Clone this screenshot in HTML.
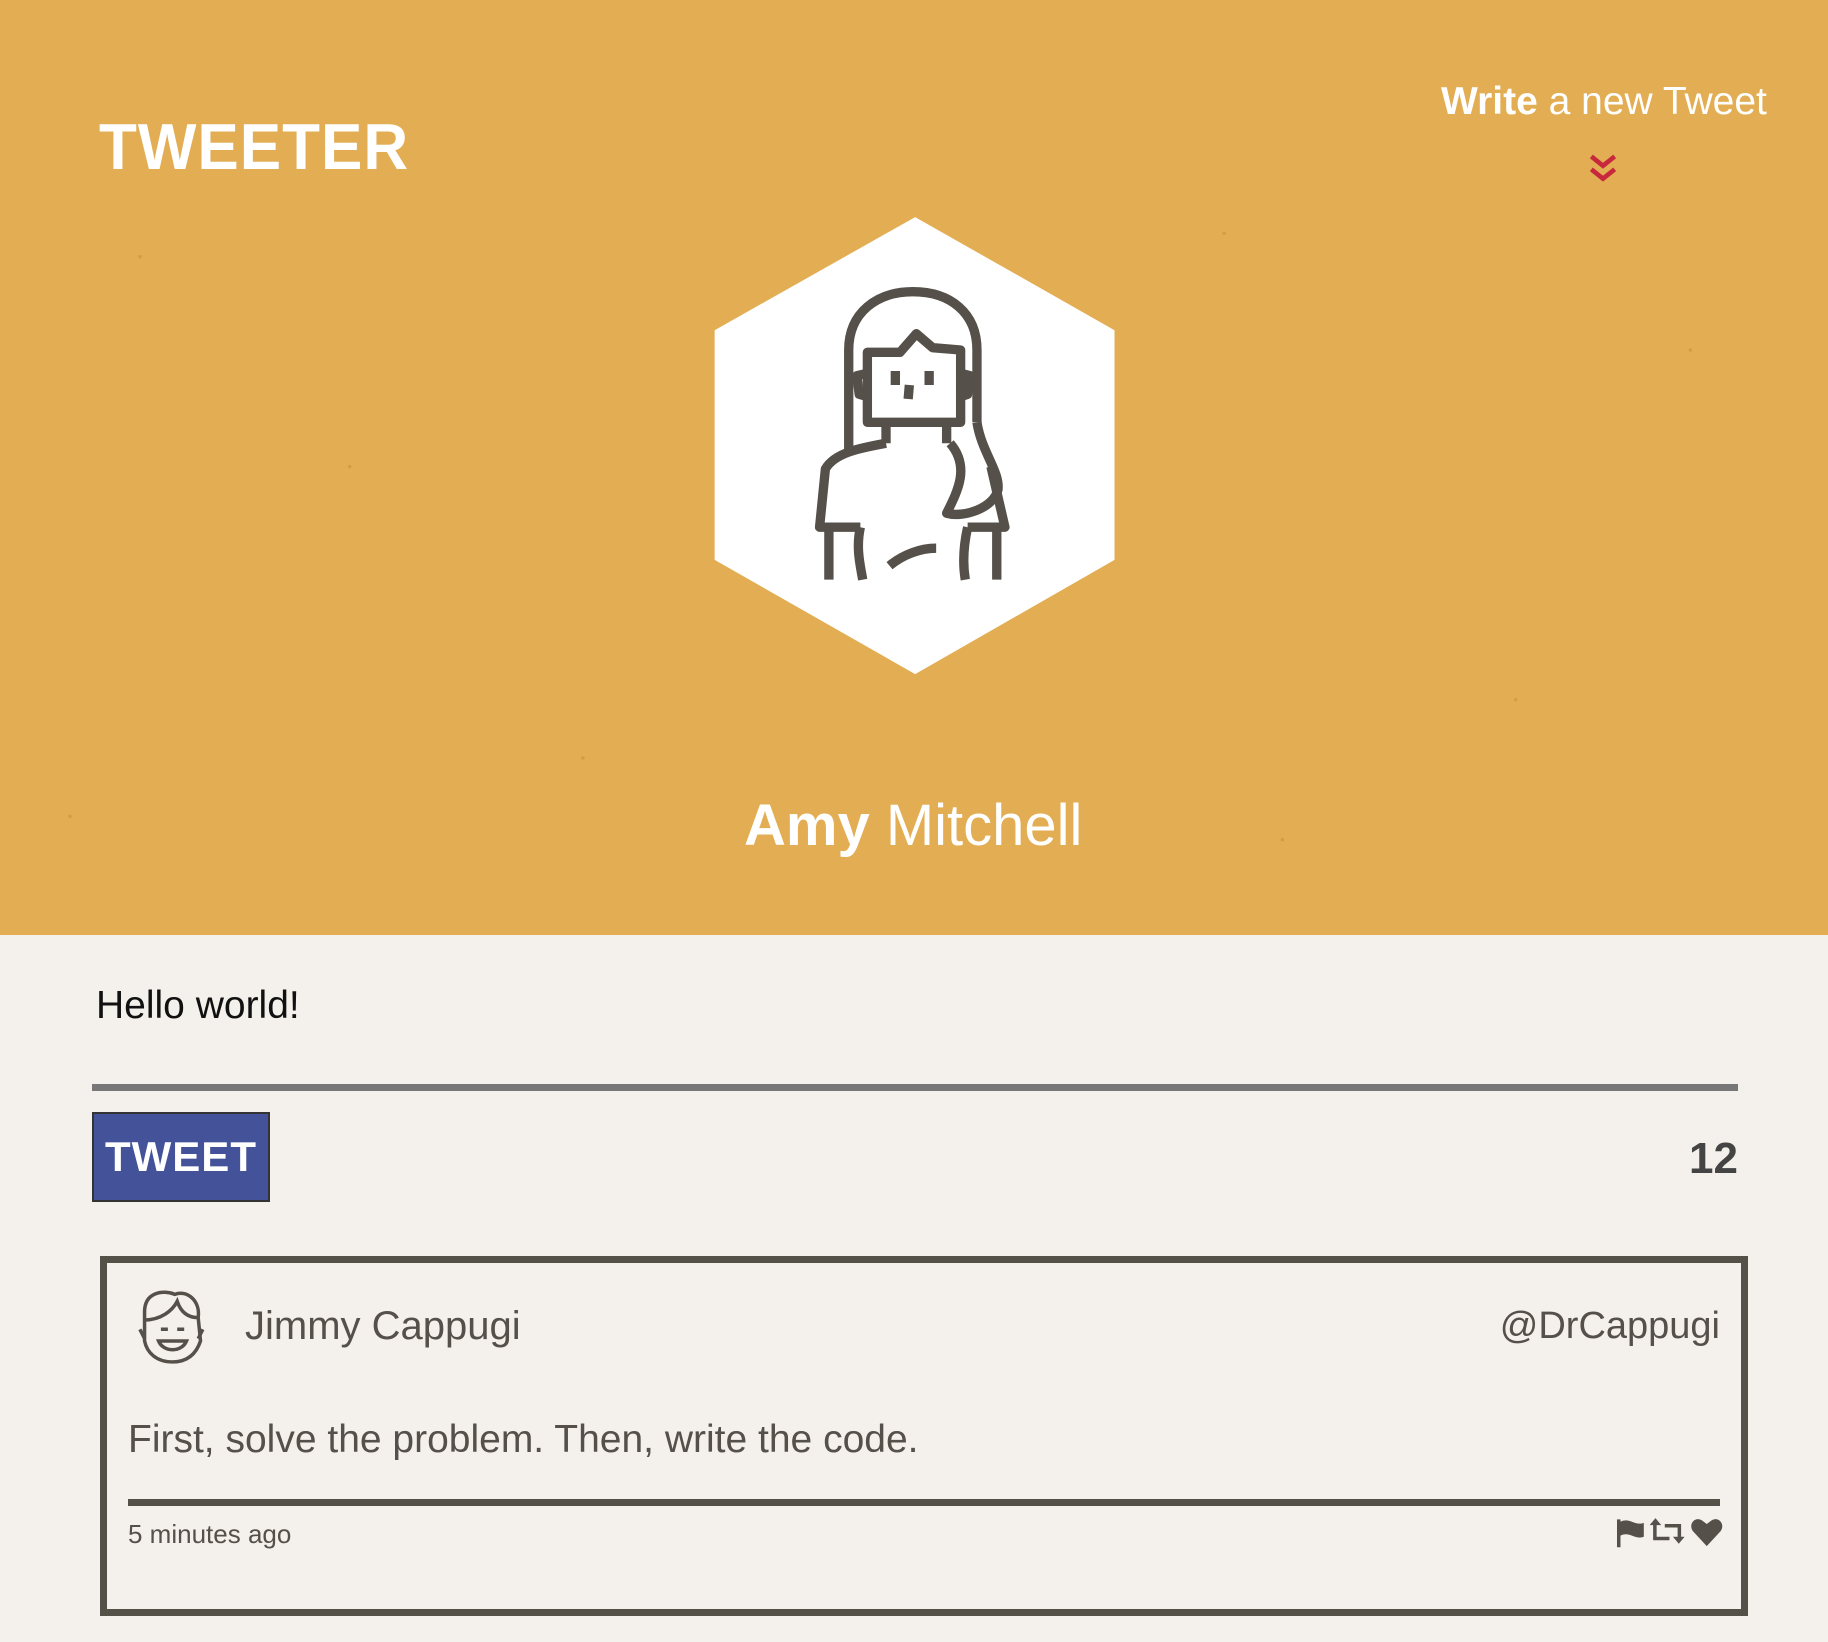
<!DOCTYPE html>
<html><head><meta charset="utf-8"><style>
*{margin:0;padding:0;box-sizing:border-box}
body{width:1828px;height:1642px;background:#f4f1ec;font-family:"Liberation Sans",sans-serif;position:relative;overflow:hidden}
.hdr{position:absolute;left:0;top:0;width:1828px;height:935px;background:#e2ad53}
.abs{position:absolute;white-space:nowrap}
</style></head><body>
<div class="hdr"></div>
<svg class="abs" style="left:0;top:0" width="1828" height="1642" viewBox="0 0 1568 1408">
<g fill="#c48f3a" opacity=".55">
<circle cx="120" cy="220" r="1.5"/><circle cx="300" cy="400" r="1.5"/><circle cx="1050" cy="200" r="1.5"/><circle cx="1300" cy="600" r="1.5"/><circle cx="500" cy="650" r="1.5"/><circle cx="1450" cy="300" r="1.5"/><circle cx="60" cy="700" r="1.5"/><circle cx="1100" cy="720" r="1.5"/>
</g>
<polygon points="785,186 956,283 956,480 785,578 613,480 613,283" fill="#fff"/>
<g fill="none" stroke="#555049" stroke-width="8" stroke-linecap="butt" stroke-linejoin="round">
<path d="M728,385 L728,300 C728,268 752,250 783,250 C815,250 838,268 838,300 L838,362"/>
<path d="M744,362 L744,302 L772,302 L786,286 L800,298 L824,300 L824,362 Z"/>
<path d="M744,320 L735,322 L737,338 L744,340 M824,320 L832,322 L830,338 L824,340"/>
<path d="M768,318 L768,330 M797,318 L797,330 M780,330 L779,342"/>
<path d="M760,362 L760,380 M812,362 L812,380"/>
<path d="M838,362 C842,388 858,404 856,420 C852,436 826,444 812,440 C822,420 832,400 815,380"/>
<path d="M760,380 C738,384 716,388 708,402 L703,452 L738,452 M850,400 L862,452 L830,452"/>
<path d="M711,452 L711,497 M738,452 C734,470 738,485 740,497 M830,452 C826,470 826,485 828,497 M855,452 L855,497"/>
<path d="M763,485 C775,475 790,470 803,470"/>
</g>
<path d="M1365,134 L1375,142 L1385,134 M1365,145 L1375,153 L1385,145" fill="none" stroke="#c8283c" stroke-width="4"/>
<g fill="none" stroke="#555049" stroke-width="3">
<path d="M124,1125 C124,1108 140,1106 150,1110 C160,1106 172,1115 170,1130 L172,1150 C168,1162 160,1168 148,1168 C134,1168 126,1160 124,1150 Z"/>
<path d="M124,1132 C138,1132 148,1124 152,1116 C156,1128 164,1130 170,1130"/>
<path d="M120,1140 L124,1148 M174,1140 L170,1148"/>
<path d="M136,1150 C140,1160 156,1160 160,1150 Z"/>
<path d="M138,1140 L144,1140 M152,1140 L158,1140"/>
</g>
<g fill="#555049">
<path d="M1387,1303 L1390,1303 L1390,1327 L1387,1327 Z M1390,1305 C1398,1301 1402,1309 1410,1306 L1410,1318 C1402,1321 1398,1313 1390,1317 Z"/>
<path d="M1415,1308 L1420,1302 L1425,1308 L1421,1308 L1421,1318 L1432,1318 L1432,1321 L1418,1321 L1418,1308 Z M1445,1318 L1440,1324 L1435,1318 L1439,1318 L1439,1310 L1428,1310 L1428,1307 L1442,1307 L1442,1318 Z"/>
<path d="M1464,1326 L1452,1313 C1448,1307 1454,1300 1460,1304 L1464,1307 L1468,1304 C1474,1300 1480,1307 1476,1313 Z"/>
</g>
</svg>
<div class="abs" style="left:99px;top:112px;font-size:62px;font-weight:900;color:#fff;letter-spacing:1px;transform:scaleY(1.05)">TWEETER</div>
<div class="abs" style="left:1441px;top:80px;font-size:39px;color:#fff"><b>Write</b> a new Tweet</div>
<div class="abs" style="left:744px;top:792px;font-size:58px;color:#fff"><b>Amy</b> Mitchell</div>
<div class="abs" style="left:96px;top:984px;font-size:39px;color:#111">Hello world!</div>
<div class="abs" style="left:92px;top:1084px;width:1646px;height:7px;background:#777"></div>
<div class="abs" style="left:92px;top:1112px;width:178px;height:90px;background:#44529a;border:2px solid #333;color:#fff;font-size:42px;font-weight:900;text-align:center;line-height:86px;letter-spacing:1px">TWEET</div>
<div class="abs" style="right:90px;top:1134px;font-size:44px;font-weight:900;color:#444">12</div>
<div class="abs" style="left:100px;top:1256px;width:1648px;height:360px;border:7px solid #545149"></div>
<div class="abs" style="left:245px;top:1304px;font-size:40px;color:#555049">Jimmy Cappugi</div>
<div class="abs" style="right:108px;top:1305px;font-size:38px;color:#555049">@DrCappugi</div>
<div class="abs" style="left:128px;top:1418px;font-size:39px;color:#555049">First, solve the problem. Then, write the code.</div>
<div class="abs" style="left:128px;top:1499px;width:1592px;height:7px;background:#545149"></div>
<div class="abs" style="left:128px;top:1519px;font-size:26px;color:#555049">5 minutes ago</div>
</body></html>
